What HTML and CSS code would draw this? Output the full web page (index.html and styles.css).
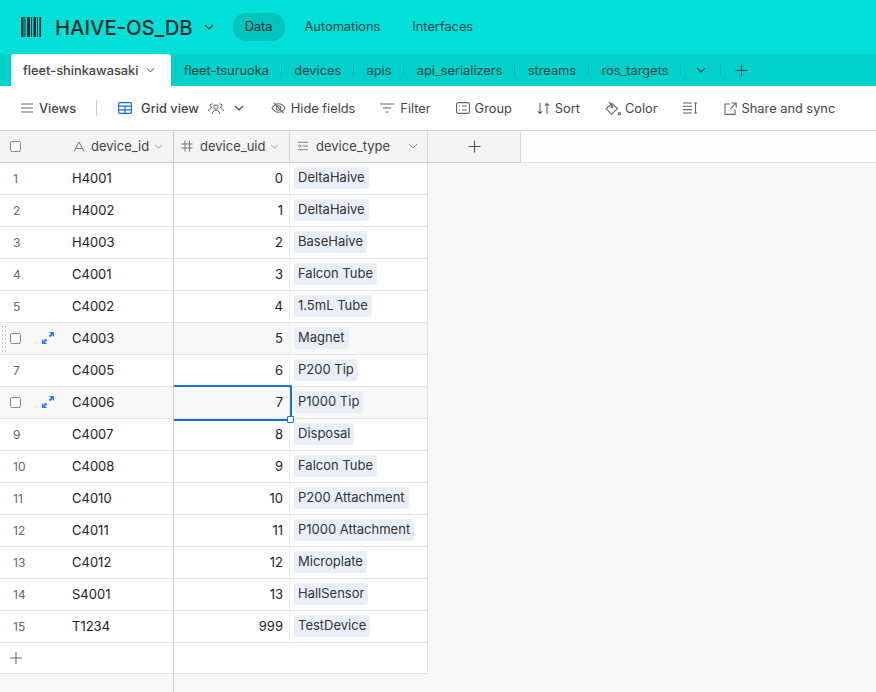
FILE: index.html
```html
<!DOCTYPE html>
<html lang="en">
<head>
    <meta charset="UTF-8">
    <title>HAIVE-OS_DB</title>
    <link rel="stylesheet" href="styles.css">
</head>
<body>
    <header class="topbar">
        <svg class="logo" width="20" height="20" viewBox="0 0 20 20" fill="#0d2b2b">
            <rect x="0" y="0" width="2.5" height="20"/>
            <rect x="3.5" y="0" width="1" height="20"/>
            <rect x="6" y="0" width="3" height="20"/>
            <rect x="10" y="0" width="1" height="20"/>
            <rect x="12.5" y="0" width="2.5" height="20"/>
            <rect x="16" y="0" width="1" height="20"/>
            <rect x="18.5" y="0" width="1.5" height="20"/>
        </svg>
        <span class="base-name">HAIVE-OS_DB</span>
        <svg class="chev base-chev" width="10" height="6" viewBox="0 0 10 6"><path d="M1 1l4 4 4-4"/></svg>
        <nav class="topnav">
            <a class="topnav-item active">Data</a>
            <a class="topnav-item">Automations</a>
            <a class="topnav-item">Interfaces</a>
        </nav>
    </header>

    <div class="tabbar">
        <div class="tab active">fleet-shinkawasaki
            <svg class="chev" width="9" height="6" viewBox="0 0 10 6"><path d="M1 1l4 4 4-4"/></svg>
        </div>
        <div class="tab">fleet-tsuruoka</div>
        <div class="tab">devices</div>
        <div class="tab">apis</div>
        <div class="tab">api_serializers</div>
        <div class="tab">streams</div>
        <div class="tab">ros_targets</div>
        <div class="tab tab-icon">
            <svg class="chev" width="10" height="6" viewBox="0 0 10 6"><path d="M1 1l4 4 4-4"/></svg>
        </div>
        <div class="tab tab-icon tab-last">
            <svg width="13" height="13" viewBox="0 0 13 13" class="line"><path d="M6.500 .5v12M.5 6.500h12"/></svg>
        </div>
    </div>

    <div class="toolbar">
        <div class="tool strong">
            <svg width="12" height="10" viewBox="0 0 12 10" class="line"><path d="M0 1h12M0 5h12M0 9h12"/></svg>
            Views
        </div>
        <div class="tool-sep"></div>
        <div class="tool strong gridview">
            <svg width="14" height="12" viewBox="0 0 14 12" fill="none" stroke="#166ee1" stroke-width="1.2"><rect x=".6" y=".6" width="12.8" height="10.8" rx="1"/><path d="M.6 4.2h12.8M.6 7.8h12.8M7 4.2v7.2" /></svg>
            Grid view
            <svg class="people" width="16" height="13" viewBox="0 0 16 13" fill="none" stroke="#555" stroke-width=".9"><circle cx="8" cy="5" r="2.2"/><path d="M4.5 12c0-2.5 1.5-4 3.5-4s3.500 1.500 3.500 4M4 5.500a1.800 1.800 0 1 1 .5-3.500M12 5.500a1.800 1.800 0 1 0-.5-3.500M.5 9c0-1.500 1-2.500 2.500-2.500M15.500 9c0-1.500-1-2.500-2.500-2.500"/></svg>
            <svg class="chev people-chev" width="10" height="6" viewBox="0 0 10 6"><path d="M1 1l4 4 4-4"/></svg>
        </div>
        <div class="tool">
            <svg width="15" height="12" viewBox="0 0 15 12" class="line"><path d="M1 6c1.700-2.800 3.800-4.200 6.500-4.200S12.300 3.200 14 6c-1.700 2.800-3.800 4.200-6.500 4.200S2.700 8.800 1 6z"/><circle cx="7.500" cy="6" r="2.200"/><path d="M3 .8l9.500 10.400"/></svg>
            Hide fields
        </div>
        <div class="tool filter">
            <svg width="14" height="10" viewBox="0 0 14 10" class="line"><path d="M0 1h14M3 5h8M5.500 9h3"/></svg>
            Filter
        </div>
        <div class="tool">
            <svg width="14" height="12" viewBox="0 0 14 12" class="line"><rect x=".6" y=".6" width="12.800" height="10.800" rx="1.500"/><path d="M3 4h1M3 8h1M6 4h5M6 8h5"/></svg>
            Group
        </div>
        <div class="tool">
            <svg width="13" height="13" viewBox="0 0 13 13" class="line"><path d="M3 1v10.500M.8 9.300L3 11.500l2.200-2.200M10 12V1.500M7.800 3.700L10 1.500l2.200 2.200"/></svg>
            Sort
        </div>
        <div class="tool color">
            <svg width="16" height="15" viewBox="0 0 16 15" class="line"><path d="M7 2.500L1.200 7.500l5.300 5.800 6-5.800z"/><path d="M4 .8l3.300 4"/><circle cx="7" cy="6" r=".7"/><circle cx="14.300" cy="12.700" r="1.200"/></svg>
            Color
        </div>
        <div class="tool">
            <svg width="14" height="12" viewBox="0 0 14 12" class="line"><path d="M0 1h9M0 4.300h9M0 7.600h9M0 11h9M12.500 1v10M11 1h3M11 11h3"/></svg>
        </div>
        <div class="tool share">
            <svg width="13" height="13" viewBox="0 0 13 13" class="line"><path d="M6 2H1v10.400h10V7.500M7.500 1h4.700v4.700M12 1.200L6.500 6.800"/></svg>
            Share and sync
        </div>
    </div>

    <div class="grid" id="grid">
        <div class="row head">
            <div class="cell cell-lead">
                <span class="check"></span>
                <svg class="field-icon a-icon" width="12" height="11" viewBox="0 0 12 11"><path d="M1 10.500L6 1l5 9.500M2.800 7.500h6.400"/></svg>
                <span class="head-label">device_id</span>
                <svg class="chev" width="9" height="5" viewBox="0 0 10 6"><path d="M1 1l4 4 4-4"/></svg>
            </div>
            <div class="cell cell-uid-head">
                <svg class="field-icon" width="12" height="12" viewBox="0 0 12 12"><path d="M4 .5v11M8.500 .5v11M.5 4h11M.5 8h11"/></svg>
                <span class="head-label">device_uid</span>
                <svg class="chev" width="9" height="5" viewBox="0 0 10 6"><path d="M1 1l4 4 4-4"/></svg>
            </div>
            <div class="cell cell-type-head">
                <svg class="field-icon" width="12" height="10" viewBox="0 0 13 10"><path d="M1 1h11M6 5h6M1 9h11M1 5h3M3 3.500L4.500 5 3 6.500"/></svg>
                <span class="head-label">device_type</span>
                <svg class="chev chev-end" width="10" height="6" viewBox="0 0 10 6"><path d="M1 1l4 4 4-4"/></svg>
            </div>
            <div class="cell add-field">
                <svg width="13" height="13" viewBox="0 0 13 13" class="line dark"><path d="M6.500 .5v12M.5 6.500h12"/></svg>
            </div>
            <div class="head-rest"></div>
        </div>
    </div>

    <script>
        var rows = [
            ['1', 'H4001', '0', 'DeltaHaive'],
            ['2', 'H4002', '1', 'DeltaHaive'],
            ['3', 'H4003', '2', 'BaseHaive'],
            ['4', 'C4001', '3', 'Falcon Tube'],
            ['5', 'C4002', '4', '1.5mL Tube'],
            ['', 'C4003', '5', 'Magnet', 'hover drag'],
            ['7', 'C4005', '6', 'P200 Tip'],
            ['', 'C4006', '7', 'P1000 Tip', 'hover selected'],
            ['9', 'C4007', '8', 'Disposal'],
            ['10', 'C4008', '9', 'Falcon Tube'],
            ['11', 'C4010', '10', 'P200 Attachment'],
            ['12', 'C4011', '11', 'P1000 Attachment'],
            ['13', 'C4012', '12', 'Microplate'],
            ['14', 'S4001', '13', 'HallSensor'],
            ['15', 'T1234', '999', 'TestDevice']
        ];
        var expand = '<svg class="expand" width="12" height="12" viewBox="0 0 12 12" fill="#2d7ff9"><path d="M7 0h5v5l-1.800-1.800-2 2-1.400-1.400 2-2zM5 12H0V7l1.800 1.800 2-2 1.400 1.400-2 2z"/></svg>';
        var html = '';
        rows.forEach(function(r) {
            var extra = r[4] || '';
            var lead = r[0] ? '<span class="rownum">' + r[0] + '</span>' : '<span class="check"></span>' + expand;
            html += '<div class="row ' + extra + '">' +
                '<div class="cell cell-lead">' + (extra.indexOf('drag') > -1 ? '<span class="grip"></span>' : '') + lead + '<span class="device-id">' + r[1] + '</span></div>' +
                '<div class="cell cell-uid">' + r[2] + (extra.indexOf('selected') > -1 ? '<span class="selection"><span class="handle"></span></span>' : '') + '</div>' +
                '<div class="cell cell-type"><span class="pill">' + r[3] + '</span></div></div>';
        });
        html += '<div class="row add-row"><div class="cell cell-lead"><svg width="12" height="12" viewBox="0 0 12 12" class="line"><path d="M6 0v12M0 6h12"/></svg></div><div class="cell cell-fill"></div></div>';
        html += '<div class="grid-foot"><div class="foot-left"></div></div>';
        document.getElementById('grid').insertAdjacentHTML('beforeend', html);
    </script>
</body>
</html>
```

FILE: styles.css
```css
* {
    box-sizing: border-box;
}

body {
    font-family: Inter, "Liberation Sans", sans-serif;
    font-size: 13px;
    color: #333;
    background-color: #f8f8f8;
    margin: 0;
    height: 692px;
    overflow: hidden;
}

svg {
    flex: none;
}

.chev path {
    fill: none;
    stroke: #444;
    stroke-width: 1.1;
}

.line {
    fill: none;
    stroke: #666;
    stroke-width: 1.1;
}

.line.dark {
    stroke: #555;
}

/* top bar */
.topbar {
    height: 54px;
    background-color: #00dfd8;
    display: flex;
    align-items: center;
    padding-left: 21px;
}

.logo {
    margin-right: 14px;
}

.base-name {
    font-size: 20.3px;
    font-weight: 500;
    color: #0d2b2b;
}

.base-chev {
    margin-left: 11px;
}

.base-chev path {
    stroke: #0d2b2b;
}

.topnav {
    display: flex;
    gap: 8px;
    margin-left: 19px;
}

.topnav-item {
    height: 28px;
    line-height: 27px;
    padding: 0 12px;
    border-radius: 14px;
    color: #174444;
    font-size: 12.8px;
}

.topnav-item.active {
    background-color: #00c5bf;
    box-shadow: inset 0 0 0 1px #00bfb9;
    color: #0d2b2b;
}

/* table tabs */
.tabbar {
    height: 32px;
    background-color: #00d2cb;
    display: flex;
    align-items: stretch;
    padding-left: 11px;
    font-size: 12.8px;
}

.tab {
    display: flex;
    align-items: center;
    padding: 0 12.7px;
    color: #174444;
    position: relative;
    white-space: nowrap;
}

.tab:not(.active):not(.tab-last)::after {
    content: "";
    position: absolute;
    right: 0;
    top: 10px;
    height: 12px;
    width: 1px;
    background-color: #00b5af;
}

.tab.active {
    background-color: #fff;
    color: #444;
    font-weight: 500;
    width: 160px;
    padding: 0 0 0 12px;
    gap: 8px;
    border-radius: 3px 3px 0 0;
}

.tab-icon {
    width: 40px;
    padding: 0;
    justify-content: center;
}

.tab-last .line {
    stroke: #174444;
}

.tab-icon .chev path {
    stroke: #174444;
}

/* view toolbar */
.toolbar {
    height: 44px;
    background-color: #fff;
    display: flex;
    align-items: center;
    gap: 25px;
    padding-left: 21px;
    color: #444;
    font-size: 12.8px;
}

.tool {
    display: flex;
    align-items: center;
    gap: 5px;
    white-space: nowrap;
}

.tool.strong {
    font-weight: 500;
    gap: 6px;
}

.tool-sep {
    width: 1px;
    height: 16px;
    background-color: #ccc;
    margin: 0 -4px 0 -5px;
}

.tool.gridview {
    gap: 9px;
    margin-right: 2px;
}

.people-chev {
    margin-left: 1px;
}

.filter {
    gap: 6px;
}

.color {
    gap: 4px;
}

.share {
    margin-left: 2px;
}

/* grid */
.grid {
    display: flex;
    flex-direction: column;
}

.row {
    display: grid;
    grid-template-columns: 174px 116px 138px;
    height: 32px;
    background-color: #fff;
    width: 428px;
}

.row.hover {
    background-color: #f8f8f8;
}

.cell {
    display: flex;
    align-items: center;
    padding-bottom: 1px;
    border-bottom: 1px solid #e2e2e2;
    border-right: 1px solid #eee;
    position: relative;
    white-space: nowrap;
}

.cell-lead {
    border-right: 1px solid #ccc;
    padding-left: 10px;
}

.rownum {
    width: 59px;
    margin-left: 3px;
    color: #666;
    font-size: 12px;
}

.device-id {
    color: #222;
}

.check {
    width: 11px;
    height: 11px;
    border: 1px solid #8c8c8c;
    border-radius: 2px;
    background-color: #fff;
    flex: none;
}

.expand {
    margin-left: 21px;
    margin-right: 18px;
}

.grip {
    position: absolute;
    left: 1px;
    top: 2px;
    width: 6px;
    height: 27px;
    background-image: radial-gradient(#c4c4c4 1px, transparent 1px);
    background-size: 3px 4px;
}

.cell-uid {
    justify-content: flex-end;
    padding-right: 6px;
    color: #222;
}

.cell-type {
    padding-left: 4px;
    border-right: 1px solid #e2e2e2;
}

.pill {
    background-color: #e9eff9;
    border-radius: 4px;
    height: 22px;
    line-height: 21px;
    padding: 0 4px;
    color: #333;
}

.selection {
    position: absolute;
    left: 0;
    right: -3px;
    top: -2px;
    bottom: -3px;
    border: 2px solid #166ee1;
    border-left: none;
    border-radius: 0 2px 2px 0;
    z-index: 2;
}

.handle {
    position: absolute;
    right: -4px;
    bottom: -4px;
    width: 7px;
    height: 7px;
    background-color: #fff;
    border: 1px solid #166ee1;
    border-radius: 1px;
}

/* header row */
.row.head {
    height: 33px;
    width: 100%;
    grid-template-columns: 174px 116px 138px 93px 1fr;
    background-color: #f4f4f4;
    border-top: 1px solid #d5d5d5;
}

.head .cell {
    border-bottom: 1px solid #ccc;
    border-right: 1px solid #d8d8d8;
    color: #444;
}

.head .cell-lead {
    border-right-color: #ccc;
}

.head .chev path {
    stroke: #888;
    stroke-width: .9;
}

.head-rest {
    background-color: #fdfdfd;
    border-bottom: 1px solid #e2e2e2;
}

.field-icon {
    fill: none;
    stroke: #777;
    stroke-width: 1;
    margin-right: 7px;
}

.a-icon {
    margin-left: 52px;
    margin-right: 6px;
}

.head-label {
    margin-right: 5px;
}

.cell-uid-head,
.cell-type-head {
    padding-left: 7px;
}

.chev-end {
    margin-left: auto;
    margin-right: 9px;
}

.add-field {
    justify-content: center;
}

/* add row and footer */
.row.add-row {
    height: 31px;
    grid-template-columns: 174px 254px;
    border-right: 1px solid #e2e2e2;
}

.cell-fill {
    border-right: none;
}

.grid-foot {
    height: 18px;
}

.foot-left {
    width: 174px;
    height: 18px;
    border-right: 1px solid #ccc;
}
```
